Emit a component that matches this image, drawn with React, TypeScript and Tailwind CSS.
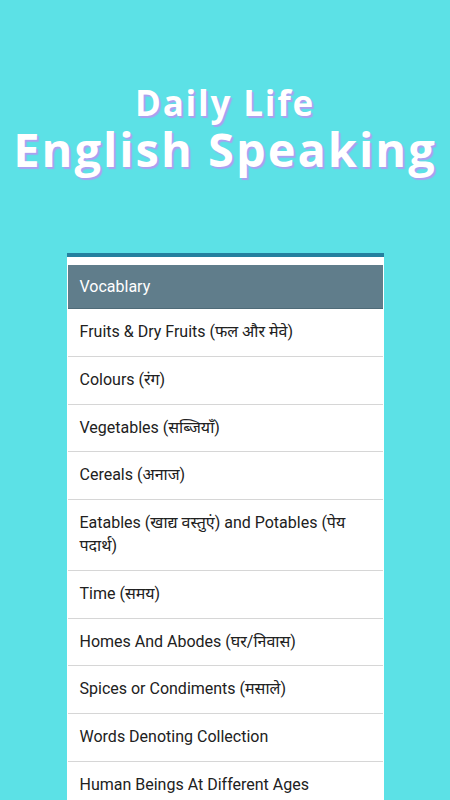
import React from "react";

const items: string[] = [
  "Fruits & Dry Fruits (फल और मेवे)",
  "Colours (रंग)",
  "Vegetables (सब्जियाँ)",
  "Cereals (अनाज)",
  "Eatables (खाद्य वस्तुएं) and Potables (पेय पदार्थ)",
  "Time (समय)",
  "Homes And Abodes (घर/निवास)",
  "Spices or Condiments (मसाले)",
  "Words Denoting Collection",
  "Human Beings At Different Ages",
];

export default function App() {
  return (
    <div className="w-[450px] h-[800px] overflow-hidden bg-[#5ce1e6] flex flex-col items-center">
      {/* Title */}
      <div
        className="pt-[83px] flex flex-col items-center text-white font-bold [text-shadow:2px_2px_1px_#ad9ff0]"
        style={{ fontFamily: '"Open Sans", "Noto Sans", sans-serif' }}
      >
        <span className="text-[35px] leading-[40px] tracking-[1.8px]">Daily Life</span>
        <span className="text-[47px] leading-[52px] tracking-[2px]">English Speaking</span>
      </div>

      {/* List card */}
      <div
        className="mt-[78px] w-[317px] bg-white border-t-4 border-[#24809f] pt-2 px-px"
        style={{ fontFamily: 'Roboto, "Noto Sans", sans-serif' }}
      >
        <div className="h-[44px] bg-[#607d8b] border-b border-[#4f6b78] flex items-center pl-[12px] text-white text-[16px]">
          Vocablary
        </div>
        {items.map((label) => (
          <div
            key={label}
            className="py-3 pl-[12px] pr-3 border-b border-[#d6d6d6] text-[16px] leading-[22.8px] text-[#212121]"
          >
            {label}
          </div>
        ))}
      </div>
    </div>
  );
}
